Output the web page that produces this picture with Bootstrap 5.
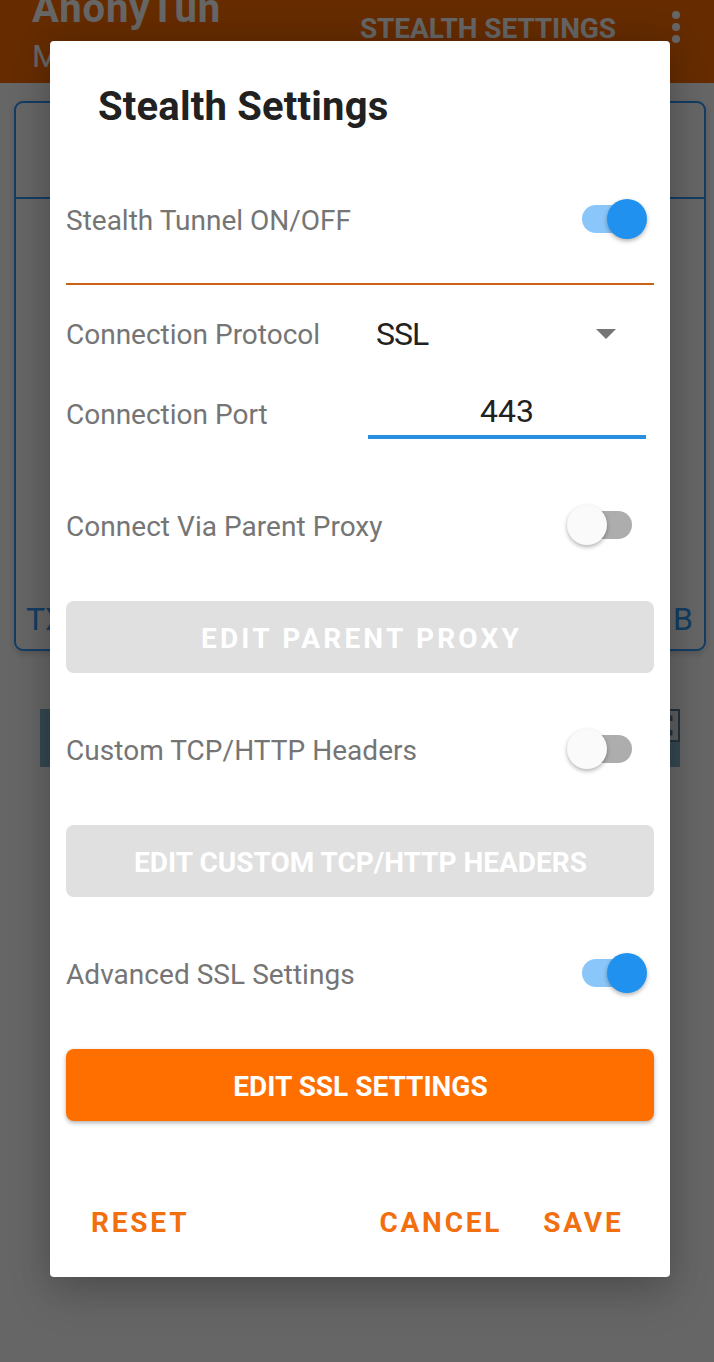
<!DOCTYPE html>
<html lang="en">
<head>
<meta charset="utf-8">
<title>AnonyTun</title>
<link href="https://cdn.jsdelivr.net/npm/bootstrap@5.3.0/dist/css/bootstrap.min.css" rel="stylesheet">
<style>
  body { font-family: Roboto, "Liberation Sans", sans-serif; font-size: 28px; line-height: 1.2; background: #fff; height: 1362px; overflow: hidden; }
  .app-bar { height: 83px; background: #ff6f00; color: #fff; padding: 0 33px 0 32px; }
  .app-name { font-size: 40px; font-weight: 700; line-height: 48px; margin-top: -15px; letter-spacing: .9px; }
  .app-sub { font-size: 32px; line-height: 40px; margin-top: 3px; }
  .app-action { font-weight: 700; line-height: 34px; margin: 12px 55px 0 0; letter-spacing: -.1px; }
  .app-more { margin-top: 10px; }
  .stats { margin: 18px 8px 0 14px; height: 550px; border: 2px solid #3098f8; border-radius: 9px; color: #3098f8; box-shadow: 0 3px 6px rgba(0,0,0,.15); font-size: 32px; }
  .stats-head { height: 96px; border-bottom: 2px solid #3098f8; }
  .stats-foot { padding: 0 11px 11px 10px; }
  .ad-strip { margin: 58px 34px 0 40px; height: 58px; background: #86b4cc; }
  .ad-info { width: 32px; height: 33px; border: 2px solid #5a8098; background: #e8ecf0; }
  .scrim { background: rgba(0,0,0,.6); }
  .dialog { width: 620px; height: 1236px; margin: 41px 0 0 50px; padding: 0 16px; border-radius: 4px; color: #757575; box-shadow: 0 20px 44px rgba(0,0,0,.15), 0 0 34px rgba(0,0,0,.16); }
  .dialog-title { font-size: 40px; font-weight: 700; line-height: 132px; height: 130px; padding-left: 32px; color: #212121; margin: 0; letter-spacing: .2px; }
  .setting { height: 152px; padding-top: 4px; letter-spacing: .04px; }
  .setting-first { height: 98px; padding-top: 2px; letter-spacing: 0; }
  .rule { height: 2px; background: #cb6316; margin-top: 14px; }
  .protocol { height: 80px; margin-top: 9px; }
  .protocol-label { padding-top: 2px; }
  .port { height: 75px; line-height: 82px; }
  .picker { width: 278px; margin-right: 8px; padding: 0 30px 0 8px; font-size: 32px; color: #212121; letter-spacing: -1px; }
  .port-field { width: 278px; height: 65px; margin-right: 8px; border-bottom: 4px solid #2b8fe0; font-size: 32px; line-height: 75px; color: #212121; }
  .toggle { width: 82px; height: 56px; display: block; overflow: visible; }
  .setting-first .toggle { margin-top: -2px; }
  .knob { filter: drop-shadow(0 2px 2px rgba(0,0,0,.3)); }
  .action { height: 72px; border: 0; border-radius: 8px; font-size: 28px; font-weight: 700; color: #fff; padding: 3px 0 0 1px; }
  .action:disabled { background: #e0e0e0; color: #fff; opacity: 1; }
  .action-on, .action-on:hover { background: #ff6f00; color: #fff; box-shadow: 0 2px 4px rgba(0,0,0,.3); }
  .spaced { letter-spacing: 3.2px; padding-left: 3px; }
  .dialog-foot { height: 156px; padding: 48px 30.5px 0 25px; }
  .text-action { color: #f26f10; font-size: 28px; font-weight: 700; letter-spacing: 2.8px; padding: 0; border: 0; }
  .cancel { margin-right: 41px; }
</style>
</head>
<body class="position-relative">
  <header class="app-bar d-flex">
    <div>
      <div class="app-name">AnonyTun</div>
      <div class="app-sub">M</div>
    </div>
    <div class="app-action ms-auto">STEALTH SETTINGS</div>
    <svg class="app-more" width="10" height="34" viewBox="0 0 10 34" fill="#fff"><circle cx="5" cy="5" r="4"/><circle cx="5" cy="17" r="4"/><circle cx="5" cy="29" r="4"/></svg>
  </header>
  <main>
    <section class="stats d-flex flex-column">
      <div class="stats-head"></div>
      <div class="stats-foot d-flex justify-content-between mt-auto"><span>TX</span><span>B</span></div>
    </section>
    <div class="ad-strip d-flex justify-content-end">
      <div class="ad-info"><svg class="d-block" width="28" height="29" viewBox="0 0 28 29" fill="none" stroke="#5a8098" stroke-width="3"><path d="M12 6h9v4M12 23h9v-4"/></svg></div>
    </div>
  </main>

  <div class="scrim position-absolute top-0 start-0 w-100 h-100 overflow-hidden">
    <div class="dialog bg-white d-flex flex-column" role="dialog">
      <h1 class="dialog-title">Stealth Settings</h1>
      <div class="setting setting-first d-flex align-items-center justify-content-between">
        <span>Stealth Tunnel ON/OFF</span>
        <svg class="toggle" viewBox="0 0 82 56"><rect x="10" y="13" width="54" height="28" rx="14" fill="#8ac6f9"/><circle class="knob" cx="55" cy="27" r="20" fill="#2091ee"/></svg>
      </div>
      <div class="rule"></div>
      <div class="protocol d-flex align-items-center justify-content-between">
        <span class="protocol-label">Connection Protocol</span>
        <div class="picker d-flex align-items-center justify-content-between">SSL<svg width="20" height="10" viewBox="0 0 20 10"><path d="M0 0h20L10 10z" fill="#757575"/></svg></div>
      </div>
      <div class="port d-flex justify-content-between">
        <span>Connection Port</span>
        <div class="port-field text-center">443</div>
      </div>
      <div class="setting d-flex align-items-center justify-content-between">
        <span>Connect Via Parent Proxy</span>
        <svg class="toggle" viewBox="0 0 82 56"><rect x="6" y="12" width="54" height="28" rx="14" fill="#adadad"/><circle class="knob" cx="15" cy="26" r="20" fill="#fafafa"/></svg>
      </div>
      <button class="btn action spaced w-100" disabled>EDIT PARENT PROXY</button>
      <div class="setting d-flex align-items-center justify-content-between">
        <span>Custom TCP/HTTP Headers</span>
        <svg class="toggle" viewBox="0 0 82 56"><rect x="6" y="12" width="54" height="28" rx="14" fill="#adadad"/><circle class="knob" cx="15" cy="26" r="20" fill="#fafafa"/></svg>
      </div>
      <button class="btn action w-100" disabled>EDIT CUSTOM TCP/HTTP HEADERS</button>
      <div class="setting d-flex align-items-center justify-content-between">
        <span>Advanced SSL Settings</span>
        <svg class="toggle" viewBox="0 0 82 56"><rect x="10" y="12" width="54" height="28" rx="14" fill="#8ac6f9"/><circle class="knob" cx="55" cy="26" r="20" fill="#2091ee"/></svg>
      </div>
      <button class="btn action action-on w-100">EDIT SSL SETTINGS</button>
      <div class="dialog-foot d-flex align-items-center">
        <button class="btn text-action me-auto">RESET</button>
        <button class="btn text-action cancel">CANCEL</button>
        <button class="btn text-action">SAVE</button>
      </div>
    </div>
  </div>
<script src="https://cdn.jsdelivr.net/npm/bootstrap@5.3.0/dist/js/bootstrap.bundle.min.js"></script>
</body>
</html>
